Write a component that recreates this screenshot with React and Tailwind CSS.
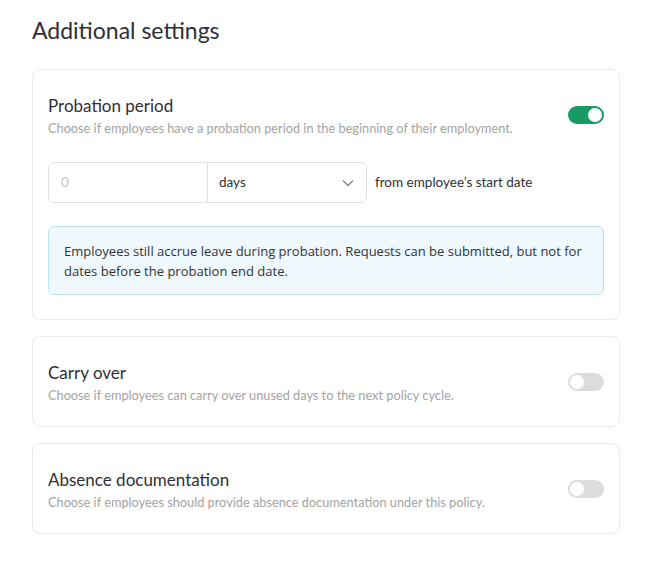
import React, { useState } from "react";

function Toggle({ checked, onChange }) {
  return (
    <button
      type="button"
      onClick={() => onChange(!checked)}
      className={`relative flex h-[18px] w-[36px] shrink-0 items-center rounded-full px-[2px] ${
        checked ? "justify-end bg-[#169b65]" : "justify-start bg-[#dcdcdc]"
      }`}
    >
      <span className="block h-[14px] w-[14px] rounded-full bg-white" />
    </button>
  );
}

function SettingHeader({ title, description, checked, onChange }) {
  return (
    <div className="flex items-center justify-between">
      <div>
        <div className="text-[17px] leading-[24px] text-[#2f2f35]">{title}</div>
        <div className="mt-[2px] text-[12.75px] leading-[16px] text-[#a3a3a3]">
          {description}
        </div>
      </div>
      <Toggle checked={checked} onChange={onChange} />
    </div>
  );
}

function Card({ children, bottom = "pb-[23px]" }) {
  return (
    <div
      className={`rounded-lg border border-[#ecebe6] bg-white pl-[15px] pr-[15px] pt-[24px] ${bottom}`}
    >
      {children}
    </div>
  );
}

export default function App() {
  const [probation, setProbation] = useState(true);
  const [carryOver, setCarryOver] = useState(false);
  const [documentation, setDocumentation] = useState(false);

  return (
    <div
      className="min-h-[568px] bg-white px-[32px] pt-[16px] pb-6"
      style={{ fontFamily: "Lato, 'Open Sans', sans-serif" }}
    >
      <h1 className="text-[23px] leading-[28px] text-[#2f2f35]">Additional settings</h1>

      <div className="mt-[25px] flex w-[588px] flex-col gap-[16px]">
        <Card bottom="pb-[24px]">
          <SettingHeader
            title="Probation period"
            description="Choose if employees have a probation period in the beginning of their employment."
            checked={probation}
            onChange={setProbation}
          />

          <div className="mt-[26px] flex items-center">
            <div className="flex h-[41px] rounded-md border border-[#e2e2e2]">
              <input
                className="w-[159px] border-r border-[#e2e2e2] bg-transparent px-[12px] text-[13.5px] text-[#2f2f35] placeholder-[#c2c2c2] outline-none"
                placeholder="0"
              />
              <div className="flex w-[158px] items-center justify-between pl-[11px] pr-[12px] text-[13.5px] text-[#2f2f35]">
                <span>days</span>
                <svg width="12" height="8" viewBox="0 0 12 8" fill="none">
                  <path d="M1 1.5l5 5 5-5" stroke="#8a8a8a" strokeWidth="1.5" />
                </svg>
              </div>
            </div>
            <span className="ml-[8px] text-[13.5px] text-[#2f2f35]">
              from employee’s start date
            </span>
          </div>

          <div
            className="mt-[23px] rounded-md border border-[#bfe2f3] bg-[#eef8fd] px-[15px] pt-[14px] pb-[13px] text-[13px] leading-[20px] text-[#333338]"
            style={{ fontFamily: "'Open Sans', sans-serif" }}
          >
            Employees still accrue leave during probation. Requests can be submitted, but not for
            dates before the probation end date.
          </div>
        </Card>

        <Card>
          <SettingHeader
            title="Carry over"
            description="Choose if employees can carry over unused days to the next policy cycle."
            checked={carryOver}
            onChange={setCarryOver}
          />
        </Card>

        <Card>
          <SettingHeader
            title="Absence documentation"
            description="Choose if employees should provide absence documentation under this policy."
            checked={documentation}
            onChange={setDocumentation}
          />
        </Card>
      </div>
    </div>
  );
}
